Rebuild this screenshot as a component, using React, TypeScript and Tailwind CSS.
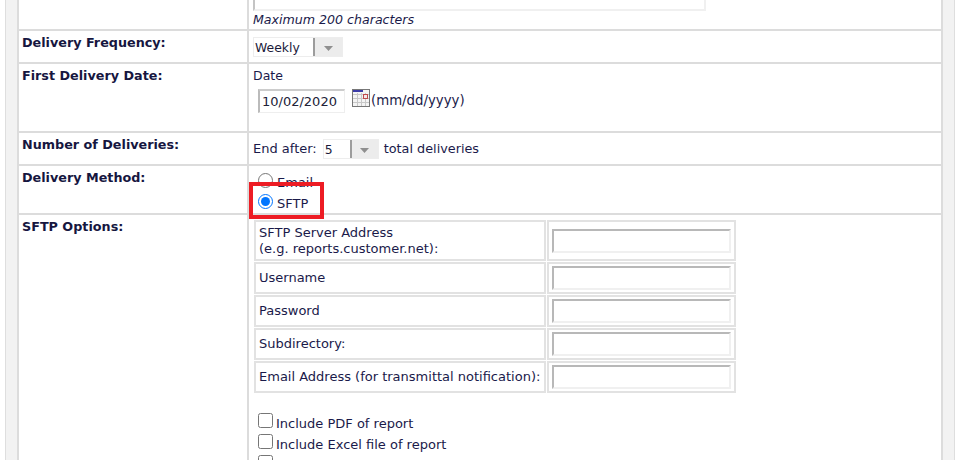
import React from 'react';

const labelCls = 'text-[12.75px] font-bold text-[#16163f] leading-[16px]';

const Arrow = () => (
  <svg width="9" height="5" viewBox="0 0 9 5" className="mt-[3px]">
    <path d="M0 0h9L4.5 5z" fill="#8f8f8f" />
  </svg>
);

const FakeSelect: React.FC<{ value: string; w: string; h: string; btn: string }> = ({ value, w, h, btn }) => (
  <div className={`flex ${w} ${h} border border-[#ededed] bg-white`}>
    <span className="flex-1 pl-[1px] leading-[19px] text-[12.4px] text-[#1a1a3a]">{value}</span>
    <span className={`flex ${btn} items-center justify-center border-l-2 border-[#9c9c9c] bg-[#ececec]`}>
      <Arrow />
    </span>
  </div>
);

const CalendarIcon = () => (
  <svg width="18" height="18" viewBox="0 0 18 18" className="shrink-0">
    <rect x="0.5" y="0.5" width="17" height="17" fill="#f4f4f4" stroke="#777" />
    <rect x="1" y="1" width="10" height="2" fill="#3c3ca8" />
    <path d="M1 5.5h16M1 9.5h16M1 13.5h16M5.5 4v13M9.5 4v13M13.5 4v13" stroke="#c8c8c8" strokeWidth="1" />
    <rect x="11.5" y="5.5" width="4" height="4" fill="#f6e8e8" stroke="#c0494d" />
  </svg>
);

const Row: React.FC<{ label: string; h: string; children: React.ReactNode; pad?: string }> = ({ label, h, children, pad = 'pl-[4px]' }) => (
  <div className={`grid grid-cols-[230px_1fr] border-b-2 border-[#dcdcdc] ${h}`}>
    <div className={`${labelCls} border-r-2 border-[#dcdcdc] pl-[3px] pt-[4px]`}>{label}</div>
    <div className={`${pad} min-w-0`}>{children}</div>
  </div>
);

const sftpFields = [
  { label: 'SFTP Server Address', sub: '(e.g. reports.customer.net):', h: 'h-[41px]' },
  { label: 'Username', h: 'h-[32px]' },
  { label: 'Password', h: 'h-[32px]' },
  { label: 'Subdirectory:', h: 'h-[32px]' },
  { label: 'Email Address (for transmittal notification):', h: 'h-[32px]' },
];

const checks = ['Include PDF of report', 'Include Excel file of report', 'Include CSV of report'];

export default function App() {
  return (
    <div className="h-[460px] w-[963px] overflow-hidden bg-white font-['DejaVu_Sans','Liberation_Sans',sans-serif] text-[13px] text-[#1a1a4a]">
      <div className="ml-[5px] w-[950px] border-x border-[#dedede] bg-[#f2f2f2] px-[11px]">
        <div className="h-[460px] border-x-2 border-[#dcdcdc] bg-white">
          <Row label="" h="h-[31px]">
            <div className="h-[11px] w-[453px] border-b-2 border-l-2 border-r-2 border-l-[#c4c4c4] border-r-[#f0f0f0] border-b-[#f0f0f0]" />
            <div className="mt-[1px] text-[12.6px] italic leading-[16px]">Maximum 200 characters</div>
          </Row>
          <Row label="Delivery Frequency:" h="h-[33px]">
            <div className="pt-[6px]">
              <FakeSelect value="Weekly" w="w-[90px]" h="h-[20px]" btn="w-[29px]" />
            </div>
          </Row>
          <Row label="First Delivery Date:" h="h-[69px]">
            <div className="pt-[4px] text-[12.5px] leading-[16px]">Date</div>
            <div className="ml-[5px] mt-[5px] flex items-start">
              <div className="h-[24px] w-[87px] border-b border-l-2 border-r border-t-2 border-b-[#eee] border-l-[#bbb] border-r-[#eee] border-t-[#ccc] pl-[2px] text-[13px] leading-[22px] text-[#222238]">
                10/02/2020
              </div>
              <span className="ml-[7px]"><CalendarIcon /></span>
              <span className="ml-[1px] mt-[3px] text-[13.3px] leading-[18px]">(mm/dd/yyyy)</span>
            </div>
          </Row>
          <Row label="Number of Deliveries:" h="h-[33px]">
            <div className="flex items-center pt-[6px]">
              <span className="text-[13px] leading-[20px]">End after:</span>
              <span className="ml-[6px]">
                <FakeSelect value="5" w="w-[56px]" h="h-[20px]" btn="w-[28px]" />
              </span>
              <span className="ml-[5px] text-[12.8px] leading-[20px]">total deliveries</span>
            </div>
          </Row>
          <Row label="Delivery Method:" h="h-[49px]">
            <div className="relative pl-[5px] pt-[4px]">
              <label className="flex h-[21px] items-center gap-[4px]">
                <input type="radio" name="method" readOnly className="m-0 h-[15px] w-[15px]" />
                <span className="pt-[4px]">Email</span>
              </label>
              <label className="flex h-[21px] items-center gap-[4px]">
                <input type="radio" name="method" defaultChecked className="m-0 h-[15px] w-[15px]" />
                <span className="pt-[4px]">SFTP</span>
              </label>
              <div className="absolute left-[-4px] top-[16px] h-[37px] w-[75px] border-4 border-[#ed1c24]" />
            </div>
          </Row>
          <Row label="SFTP Options:" h="h-[400px]" pad="pl-[5px] pt-[5px]">
            <div className="flex w-[482px] flex-col gap-[1px]">
              {sftpFields.map((f) => (
                <div key={f.label} className={`grid grid-cols-[292px_189px] gap-[1px] ${f.h}`}>
                  <div className="flex flex-col justify-center border-2 border-[#e2e2e2] pl-[3px] leading-[16px]">
                    <span>{f.label}</span>
                    {f.sub && <span>{f.sub}</span>}
                  </div>
                  <div className="flex items-center border-2 border-[#e2e2e2] pl-[3px]">
                    <input
                      type="text"
                      className="h-[24px] w-[179px] border-2 border-b-[#f0f0f0] border-l-[#b8b8b8] border-r-[#f0f0f0] border-t-[#b8b8b8] outline-none"
                    />
                  </div>
                </div>
              ))}
            </div>
            <div className="mt-[17px] pl-[4px]">
              {checks.map((c) => (
                <label key={c} className="flex h-[21px] items-center gap-[3px]">
                  <input type="checkbox" className="m-0 h-[15px] w-[15px]" />
                  <span className="pt-[6px]">{c}</span>
                </label>
              ))}
            </div>
          </Row>
        </div>
      </div>
    </div>
  );
}
